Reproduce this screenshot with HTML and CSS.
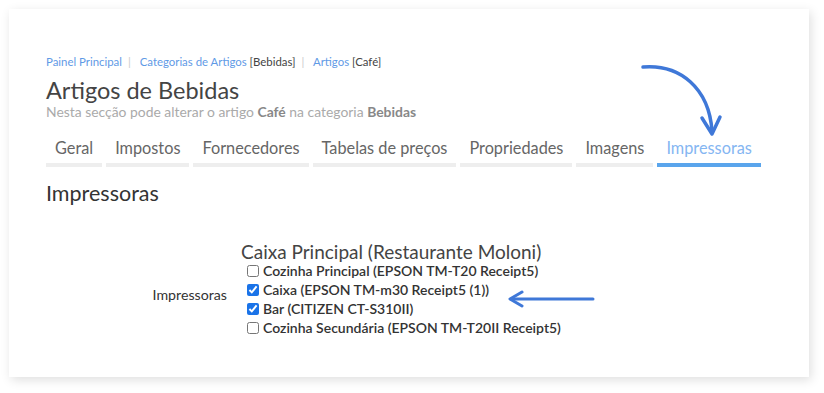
FILE: index.html
```html
<!DOCTYPE html>
<html lang="pt">
<head>
  <meta charset="UTF-8" />
  <title>Artigos de Bebidas</title>
  <link rel="stylesheet" href="styles.css">
</head>
<body>

<div class="card">
  <div class="breadcrumb">
    <a href="#">Painel Principal</a><span class="sep">|</span>
    <a href="#">Categorias de Artigos</a> [Bebidas]<span class="sep">|</span>
    <a href="#">Artigos</a> [Café]
  </div>

  <h1 class="title">Artigos de Bebidas</h1>
  <p class="subtitle">Nesta secção pode alterar o artigo <b>Café</b> na categoria <b>Bebidas</b></p>

  <div class="tabs">
    <div class="tab">Geral</div>
    <div class="tab">Impostos</div>
    <div class="tab">Fornecedores</div>
    <div class="tab">Tabelas de preços</div>
    <div class="tab">Propriedades</div>
    <div class="tab">Imagens</div>
    <div class="tab active">Impressoras</div>
  </div>

  <h3 class="section-title">Impressoras</h3>

  <div class="form-row">
    <label class="form-label">Impressoras</label>
    <div class="form-field">
      <div class="group-title">Caixa Principal (Restaurante Moloni)</div>
      <label class="check"><input type="checkbox" /> Cozinha Principal (EPSON TM-T20 Receipt5)</label>
      <label class="check"><input type="checkbox" checked /> Caixa (EPSON TM-m30 Receipt5 (1))</label>
      <label class="check"><input type="checkbox" checked /> Bar (CITIZEN CT-S310II)</label>
      <label class="check"><input type="checkbox" /> Cozinha Secundária (EPSON TM-T20II Receipt5)</label>
    </div>
  </div>
</div>

<!-- annotation arrows drawn over the screenshot -->
<svg class="arrows" width="824" height="393" viewBox="0 0 824 393">
  <g fill="none" stroke="#3f78d8" stroke-linecap="round" stroke-linejoin="round">
    <path d="M643 67 C 680 64, 709 88, 712 131" stroke-width="3.5"/>
    <path d="M702 118 L712 134 L720 117" stroke-width="3.5"/>
    <path d="M593 299 L511 299" stroke-width="3"/>
    <path d="M522 292 L510 299 L522 306" stroke-width="3"/>
  </g>
</svg>

</body>
</html>
```

FILE: styles.css
```css
* { margin: 0; padding: 0; box-sizing: border-box; }
body {
  font-family: Lato, "Open Sans", sans-serif;
  background: #fff; color: #333;
  width: 824px; height: 393px; overflow: hidden; position: relative;
}
.card {
  margin: 9px 0 0 9px; width: 800px; height: 368px;
  background: #fff; padding: 46px 37px 0;
  box-shadow: 2px 3px 10px rgba(0, 0, 0, 0.13);
}
.breadcrumb { font-size: 11.4px; line-height: 14px; color: #444; }
.breadcrumb a { color: #5f9ae6; text-decoration: none; }
.breadcrumb .sep { color: #ccc; margin: 0 6px; }

.title {
  font-size: 23.5px; font-weight: 400; color: #444;
  line-height: 26px; margin-top: 8px;
}
.subtitle { font-size: 13.9px; line-height: 16px; color: #aaa; margin-top: 1px; }
.subtitle b { color: #888; font-weight: 700; }

.tabs { display: flex; gap: 4px; margin-top: 18px; }
.tab {
  font-size: 16.3px; line-height: 20px; color: #666;
  padding: 0 9px 5px; border-bottom: 4px solid #eee;
}
.tab.active { color: #85b6f2; border-bottom-color: #5aa5ec; }

.section-title {
  font-size: 21.5px; font-weight: 400; color: #333;
  line-height: 22px; margin-top: 15px;
}

.form-row { display: flex; align-items: center; margin-top: 39px; }
.form-label {
  width: 195px; text-align: right; padding: 8px 14px 0 0;
  font-size: 14.2px; color: #333;
}
.form-field { display: flex; flex-direction: column; }
.group-title { font-size: 19px; line-height: 18px; color: #444; }
.check {
  display: flex; align-items: center; gap: 3px;
  font-size: 14px; font-weight: 600; line-height: 19px; color: #333;
}
.check input {
  width: 12px; height: 12px; margin: 0 1px 0 6px;
  accent-color: #1a73e8;
}

.arrows { position: absolute; left: 0; top: 0; pointer-events: none; }
```
